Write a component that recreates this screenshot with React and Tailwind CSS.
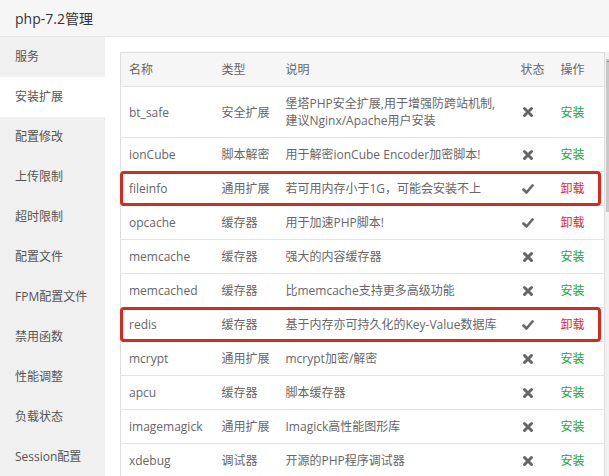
import React from 'react';

const menu = ['服务', '安装扩展', '配置修改', '上传限制', '超时限制', '配置文件', 'FPM配置文件', '禁用函数', '性能调整', '负载状态', 'Session配置'];

const rows = [
  { name: 'bt_safe', type: '安全扩展', desc: ['堡塔PHP安全扩展,用于增强防跨站机制,', '建议Nginx/Apache用户安装'], on: false },
  { name: 'ionCube', type: '脚本解密', desc: ['用于解密ionCube Encoder加密脚本!'], on: false },
  { name: 'fileinfo', type: '通用扩展', desc: ['若可用内存小于1G，可能会安装不上'], on: true, mark: true },
  { name: 'opcache', type: '缓存器', desc: ['用于加速PHP脚本!'], on: true },
  { name: 'memcache', type: '缓存器', desc: ['强大的内容缓存器'], on: false },
  { name: 'memcached', type: '缓存器', desc: ['比memcache支持更多高级功能'], on: false },
  { name: 'redis', type: '缓存器', desc: ['基于内存亦可持久化的Key-Value数据库'], on: true, mark: true },
  { name: 'mcrypt', type: '通用扩展', desc: ['mcrypt加密/解密'], on: false },
  { name: 'apcu', type: '缓存器', desc: ['脚本缓存器'], on: false },
  { name: 'imagemagick', type: '通用扩展', desc: ['Imagick高性能图形库'], on: false },
  { name: 'xdebug', type: '调试器', desc: ['开源的PHP程序调试器'], on: false },
];

const CrossIcon = () => (
  <svg width="12" height="12" viewBox="0 0 12 12" className="block">
    <path d="M2.5 2.5L9.5 9.5M9.5 2.5L2.5 9.5" stroke="#666" strokeWidth="3" strokeLinecap="round" />
  </svg>
);

const CheckIcon = () => (
  <svg width="12" height="12" viewBox="0 0 12 12" className="block">
    <path d="M1.5 6.5L4.5 9.5L10.5 2.5" stroke="#666" strokeWidth="2.6" fill="none" strokeLinecap="round" strokeLinejoin="round" />
  </svg>
);

export default function App() {
  return (
    <div className="w-[609px] h-[476px] overflow-hidden bg-white text-[#666] font-['Open_Sans','Noto_Sans_CJK_SC',sans-serif]">
      {/* title bar */}
      <div className="h-[37px] bg-[#f6f6f6] border-b border-[#e8e8e8] flex items-center px-[15px] text-[14px] text-[#333]">
        php-7.2管理
      </div>

      <div className="flex h-[439px]">
        {/* side menu */}
        <div className="w-[105px] shrink-0 bg-[#f0f0f0]">
          {menu.map((m) => (
            <div
              key={m}
              className={`h-[40px] flex items-center pl-[15px] text-[12px] text-[#555] ${m === '安装扩展' ? 'bg-white' : ''}`}
            >
              {m}
            </div>
          ))}
        </div>

        {/* content */}
        <div className="flex-1 flex pt-[15px] pl-[15px]">
          <div className="w-[484px] shrink-0">
            <table className="w-[484px] table-fixed border-collapse border border-[#ddd] text-[12px] leading-[17px]">
              <colgroup>
                <col className="w-[93px]" />
                <col className="w-[64px]" />
                <col className="w-[235px]" />
                <col className="w-[40px]" />
                <col className="w-[52px]" />
              </colgroup>
              <thead>
                <tr className="bg-[#f6f6f6]">
                  <th className="text-left font-normal px-[8px] py-[8px]">名称</th>
                  <th className="text-left font-normal px-[8px] py-[8px]">类型</th>
                  <th className="text-left font-normal px-[8px] py-[8px]">说明</th>
                  <th className="text-left font-normal px-[8px] py-[8px]">状态</th>
                  <th className="text-left font-normal px-[8px] py-[8px]">操作</th>
                </tr>
              </thead>
              <tbody>
                {rows.map((r) => (
                  <tr key={r.name} className="border-t border-[#e4e4e4]">
                    <td className="relative px-[8px] py-[8px] align-middle whitespace-nowrap">
                      {r.name}
                      {r.mark && (
                        <div className="absolute left-[-1px] top-[-1px] w-[481px] h-[35px] border-[3px] border-[#d52a20] rounded-[4px] pointer-events-none" />
                      )}
                    </td>
                    <td className="px-[8px] py-[8px] align-middle whitespace-nowrap">{r.type}</td>
                    <td className="px-[8px] py-[8px] align-middle whitespace-nowrap">
                      {r.desc.map((d, i) => (
                        <div key={i}>{d}</div>
                      ))}
                    </td>
                    <td className="px-[8px] py-[8px] align-middle">
                      <div className="pl-[1px]">{r.on ? <CheckIcon /> : <CrossIcon />}</div>
                    </td>
                    <td className={`px-[8px] py-[8px] align-middle whitespace-nowrap ${r.on ? 'text-[#e0282a]' : 'text-[#20a53a]'}`}>
                      {r.on ? '卸载' : '安装'}
                    </td>
                  </tr>
                ))}
              </tbody>
            </table>
          </div>

          {/* scrollbar */}
          <div className="ml-[1px] w-[6px] mt-0 bg-[#f1f1f1] relative">
            <div className="absolute left-[2px] top-[9px] w-[3px] h-[1px] bg-[#888]" />
            <div className="mt-[7px] ml-[1px] w-[4px] h-[153px] bg-[#c8c8c8]" />
          </div>
        </div>
      </div>
    </div>
  );
}
